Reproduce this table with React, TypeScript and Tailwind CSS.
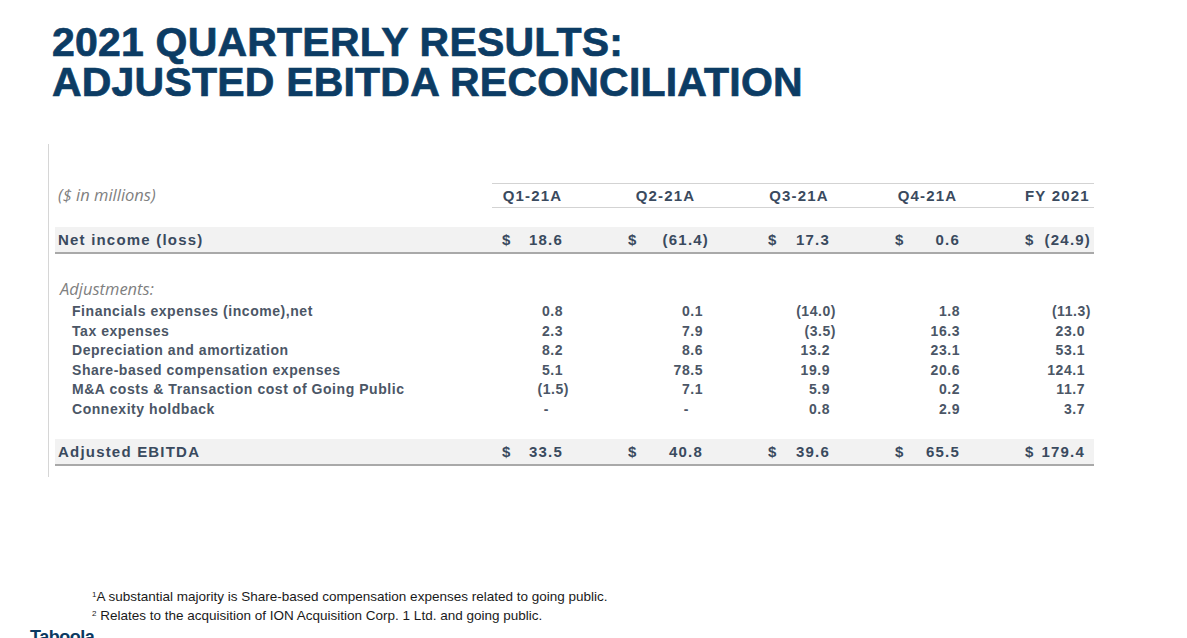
import React from "react";

type Cell = string;

const columns = ["Q1-21A", "Q2-21A", "Q3-21A", "Q4-21A", "FY 2021"];

const netIncome: Cell[] = ["18.6", "(61.4)", "17.3", "0.6", "(24.9)"];
const adjustedEbitda: Cell[] = ["33.5", "40.8", "39.6", "65.5", "179.4"];

const adjustments: { label: string; values: Cell[] }[] = [
  { label: "Financials expenses (income),net", values: ["0.8", "0.1", "(14.0)", "1.8", "(11.3)"] },
  { label: "Tax expenses", values: ["2.3", "7.9", "(3.5)", "16.3", "23.0"] },
  { label: "Depreciation and amortization", values: ["8.2", "8.6", "13.2", "23.1", "53.1"] },
  { label: "Share-based compensation expenses", values: ["5.1", "78.5", "19.9", "20.6", "124.1"] },
  { label: "M&A costs & Transaction cost of Going Public", values: ["(1.5)", "7.1", "5.9", "0.2", "11.7"] },
  { label: "Connexity holdback", values: ["-", "-", "0.8", "2.9", "3.7"] },
];

const sans = "font-['Liberation_Sans',Arial,sans-serif]";
const italic = "font-['Open_Sans','Lato',sans-serif] italic text-[#7f7f7f]";
const colGrid = "grid grid-cols-[61px_75px_62px_65px_60px] gap-x-[65px] pl-[10px] pr-[9px]";

const Num = ({ v }: { v: string }) => {
  if (v === "-") return <span className="mr-[14px]">-</span>;
  const neg = v.startsWith("(");
  return <span className={neg ? "-mr-[6px]" : ""}>{v}</span>;
};

const TotalRow = ({ label, values }: { label: string; values: Cell[] }) => (
  <div className="flex h-[27px] w-[1039px] ml-[6px] bg-[#f2f2f2] border-b-2 border-[#a9a9a9] text-[15px] font-bold tracking-[1.2px] text-[#3a4a5e] leading-[25px]">
    <div className="w-[437px] pl-[3px]">{label}</div>
    <div className={`w-[602px] ${colGrid}`}>
      {values.map((v, i) => (
        <div key={i} className="flex justify-between whitespace-nowrap">
          <span>$</span>
          <Num v={v} />
        </div>
      ))}
    </div>
  </div>
);

export default function App() {
  return (
    <div className={`relative w-[1187px] h-[638px] overflow-hidden bg-white ${sans}`}>
      {/* Title */}
      <div className="pt-[22px] pl-[52px] text-[41px] leading-[40px] font-bold tracking-[0.2px] text-[#0c3c64] [-webkit-text-stroke:0.7px_#0c3c64]">
        <h1 className="h-[40px]">2021 QUARTERLY RESULTS:</h1>
        <h1 className="h-[40px]">ADJUSTED EBITDA RECONCILIATION</h1>
      </div>

      {/* Table */}
      <div className="mt-[42px] ml-[48px] w-[1050px] border-l border-[#d6d6d6] pt-[39px] pb-[11px]">
        {/* header */}
        <div className="flex ml-[6px] w-[1039px] h-[25px]">
          <div className={`w-[437px] pl-[3px] text-[16.5px] leading-[23px] ${italic}`}>($ in millions)</div>
          <div
            className={`w-[602px] border-y border-[#d3d3d3] text-[15px] font-bold tracking-[1.2px] text-[#3a4a5e] leading-[23px] ${colGrid}`}
          >
            {columns.map((c) => (
              <div key={c} className="text-center whitespace-nowrap">
                {c}
              </div>
            ))}
          </div>
        </div>

        <div className="mt-[19px]">
          <TotalRow label="Net income (loss)" values={netIncome} />
        </div>

        <div className={`mt-[25px] ml-[11px] h-[20px] text-[16.5px] leading-[20px] ${italic}`}>Adjustments:</div>

        <div className="mt-[3px] ml-[6px] w-[1039px] text-[14px] font-bold tracking-[0.55px] text-[#4b5666]">
          {adjustments.map((row) => (
            <div key={row.label} className="flex h-[19.6px] leading-[19.6px]">
              <div className="w-[437px] pl-[17px]">{row.label}</div>
              <div className={`w-[602px] ${colGrid}`}>
                {row.values.map((v, i) => (
                  <div key={i} className="flex justify-end">
                    <Num v={v} />
                  </div>
                ))}
              </div>
            </div>
          ))}
        </div>

        <div className="mt-[19px]">
          <TotalRow label="Adjusted EBITDA" values={adjustedEbitda} />
        </div>
      </div>

      {/* Footnotes */}
      <div className="mt-[110px] pl-[92px] text-[13.5px] leading-[19px] text-[#1a1a1a]">
        <p>
          <sup className="text-[8px]">1</sup>A substantial majority is Share-based compensation expenses related to going public.
        </p>
        <p>
          <sup className="text-[8px]">2</sup> Relates to the acquisition of ION Acquisition Corp. 1 Ltd. and going public.
        </p>
      </div>

      {/* Logo, cut off at the bottom */}
      <div className="mt-[3px] pl-[30px] text-[18px] leading-[18px] font-bold tracking-[-0.5px] text-[#0b3a62]">
        Taboola
      </div>
    </div>
  );
}
